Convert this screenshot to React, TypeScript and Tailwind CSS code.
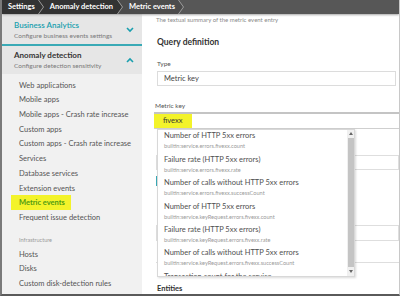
import React from 'react';

const items = [
  'Web applications',
  'Mobile apps',
  'Mobile apps - Crash rate increase',
  'Custom apps',
  'Custom apps - Crash rate increase',
  'Services',
  'Database services',
  'Extension events',
  'Metric events',
  'Frequent issue detection',
];

const infra = ['Hosts', 'Disks', 'Custom disk-detection rules'];

const suggestions = [
  ['Number of HTTP 5xx errors', 'builtin:service.errors.fivexx.count'],
  ['Failure rate (HTTP 5xx errors)', 'builtin:service.errors.fivexx.rate'],
  ['Number of calls without HTTP 5xx errors', 'builtin:service.errors.fivexx.successCount'],
  ['Number of HTTP 5xx errors', 'builtin:service.keyRequest.errors.fivexx.count'],
  ['Failure rate (HTTP 5xx errors)', 'builtin:service.keyRequest.errors.fivexx.rate'],
  ['Number of calls without HTTP 5xx errors', 'builtin:service.keyRequest.errors.fivexx.successCount'],
  ['Transaction count for the service', ''],
];

function Sep({ from, to }: { from: string; to: string }) {
  return (
    <svg width="7" height="14" viewBox="0 0 7 14" className="shrink-0">
      <rect width="7" height="14" fill={to} />
      <polygon points="0,0 5,7 0,14" fill={from} />
      <polyline points="0.5,0 5.5,7 0.5,14" fill="none" stroke="#9a9a9a" strokeWidth="1" />
    </svg>
  );
}

function Chevron({ up }: { up?: boolean }) {
  return (
    <svg width="8" height="6" viewBox="0 0 8 6">
      <polyline
        points={up ? '1,5 4,2 7,5' : '1,1 4,4 7,1'}
        fill="none"
        stroke="#1a9fae"
        strokeWidth="1.6"
      />
    </svg>
  );
}

function Header({ title, sub, active, up }: { title: string; sub: string; active?: boolean; up?: boolean }) {
  return (
    <div className="flex h-[28px] items-center justify-between bg-[#e6e6e6] pl-[12px] pr-[8px]">
      <div className="flex flex-col">
        <span
          className={`text-[8px] leading-[11px] ${
            active ? 'font-bold text-[#353535]' : 'font-semibold text-[#1a9fae]'
          }`}
        >
          {title}
        </span>
        <span className="text-[6.5px] leading-[9px] text-[#7a7a7a]">{sub}</span>
      </div>
      <Chevron up={up} />
    </div>
  );
}

export default function App() {
  return (
    <div className="flex h-[296px] w-[400px] flex-col overflow-hidden border-b-2 border-l-2 border-r border-b-[#5a5a5a] border-l-[#7a7a7a] border-r-[#c8c8c8] bg-white font-['Lato','Noto_Sans',sans-serif]">
      {/* breadcrumb */}
      <div className="relative z-10 flex h-[14px] shrink-0 items-stretch bg-[#575757] text-[7.5px] font-bold text-white shadow-[0_1px_2px_rgba(0,0,0,0.35)]">
        <div className="flex items-center bg-[#333] pl-[6px] pr-[3px]">Settings</div>
        <Sep from="#333" to="#333" />
        <div className="flex items-center bg-[#333] pl-[5px] pr-[4px]">Anomaly detection</div>
        <Sep from="#333" to="#4c4c4c" />
        <div className="flex items-center bg-[#4c4c4c] pl-[5px] pr-[3px]">Metric events</div>
        <Sep from="#4c4c4c" to="#575757" />
      </div>

      <div className="flex min-h-0 flex-1">
        {/* sidebar */}
        <div className="flex w-[140px] shrink-0 flex-col bg-[#f1f1f1] pt-[2px]">
          <Header title="Business Analytics" sub="Configure business events settings" />
          <div className="h-[2px] bg-[#3aaab6]" />
          <Header title="Anomaly detection" sub="Configure detection sensitivity" active up />
          <div className="flex flex-col pt-[4px]">
            {items.map((it) =>
              it === 'Metric events' ? (
                <div key={it} className="flex h-[14.7px] items-center pl-[9px]">
                  <span className="flex h-[15px] w-[60px] items-center bg-[#f3f32a] pl-[8px] text-[7.5px] font-bold text-[#4f9c12]">
                    {it}
                  </span>
                </div>
              ) : (
                <div key={it} className="flex h-[14.7px] items-center pl-[17px] text-[7.5px] text-[#555]">
                  {it}
                </div>
              )
            )}
            <div className="mt-[8px] flex h-[14px] items-center pl-[17px] text-[5.5px] text-[#9a9a9a]">
              Infrastructure
            </div>
            {infra.map((it) => (
              <div key={it} className="flex h-[14.7px] items-center pl-[17px] text-[7.5px] text-[#555]">
                {it}
              </div>
            ))}
          </div>
        </div>

        {/* main */}
        <div className="flex min-w-0 flex-1 flex-col bg-white">
          <div className="h-[11px] pl-[14px] text-[6px] leading-[11px] text-[#8a8a8a]">
            The textual summary of the metric event entry
          </div>
          <div className="mt-[11px] h-[12px] pl-[15px] text-[8.5px] font-bold leading-[12px] text-[#333]">
            Query definition
          </div>
          <div className="mt-[11px] h-[10px] pl-[15px] text-[6.5px] leading-[10px] text-[#555]">Type</div>
          <div className="ml-[15px] mr-[3px] mt-[2px] flex h-[15px] items-center border border-[#dcdcdc] pl-[6px] text-[7.5px] text-[#444]">
            Metric key
          </div>
          <div className="mt-[15px] h-[10px] pl-[13px] text-[6.5px] leading-[10px] text-[#555]">Metric key</div>
          <div className="ml-[12px] mt-[1px] flex h-[17px] items-center border-b border-t-2 border-b-[#cfcfcf] border-t-[#c4c4c4]">
            <span className="flex h-[14px] w-[38px] items-center bg-[#f3f32a] pl-[9px] text-[7.5px] text-[#333]">
              fivexx
            </span>
          </div>

          {/* form behind the suggestion list */}
          <div className="relative h-[156px]">
            <div className="ml-[14px] mt-[26px] h-[15px] border border-[#dedede]" />
            <div className="ml-[14px] mt-[6px] h-[10px] border-l-2 border-[#3aaab6]" />
            <div className="ml-[14px] mt-[39px] h-[16px] border border-[#dedede]" />
            <div className="ml-[14px] mt-[21px] border-t border-[#dedede]" />

            <div className="absolute left-[15px] top-0 flex h-[148px] w-[198px] overflow-hidden border border-[#d8d8d8] bg-white shadow-[1px_1px_2px_rgba(0,0,0,0.15)]">
              <div className="flex min-w-0 flex-1 flex-col">
                {suggestions.map(([t, s], i) => (
                  <div key={i} className="flex h-[23.4px] shrink-0 flex-col pl-[6px] pt-[1.5px]">
                    <span className="text-[7.5px] leading-[10px] text-[#505050]">{t}</span>
                    {s && <span className="text-[5.6px] leading-[10px] text-[#9a9a9a]">{s}</span>}
                  </div>
                ))}
              </div>
              <div className="flex w-[7px] shrink-0 flex-col bg-[#f0f0f0]">
                <div className="flex h-[8px] items-center justify-center">
                  <svg width="4" height="3" viewBox="0 0 4 3">
                    <polygon points="0,3 2,0 4,3" fill="#666" />
                  </svg>
                </div>
                <div className="mx-[0.5px] flex-1 bg-[#c4c4c4]" />
                <div className="flex h-[9px] items-center justify-center">
                  <svg width="4" height="3" viewBox="0 0 4 3">
                    <polygon points="0,0 4,0 2,3" fill="#666" />
                  </svg>
                </div>
              </div>
            </div>
          </div>

          <div className="h-[10px] pl-[15px] text-[7.5px] font-bold leading-[10px] text-[#333]">Entities</div>
        </div>
      </div>
    </div>
  );
}
